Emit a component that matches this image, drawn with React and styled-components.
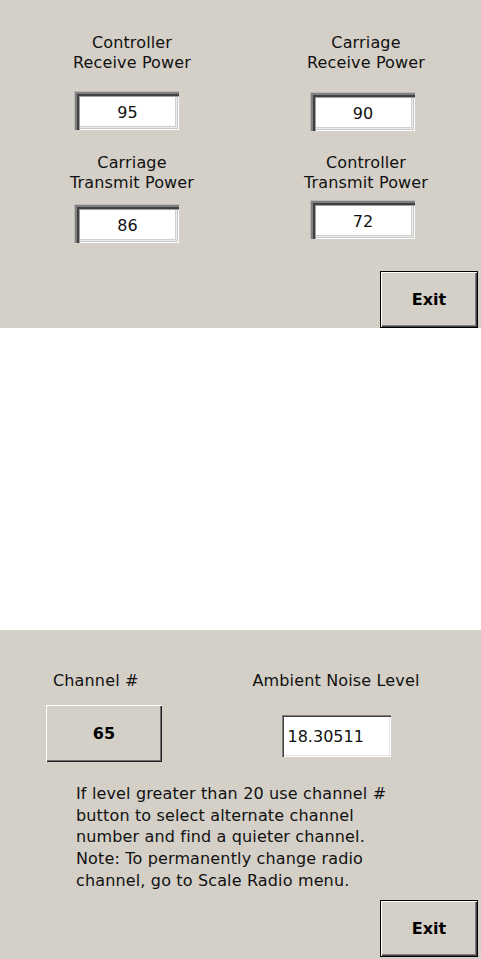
import React from "react";
import styled, { createGlobalStyle } from "styled-components";

const GlobalStyle = createGlobalStyle`
  html, body {
    margin: 0;
    padding: 0;
    background: #ffffff;
  }
  body {
    font-family: "DejaVu Sans", Verdana, sans-serif;
    color: #000000;
    width: 481px;
  }
`;

const Panel = styled.section`
  box-sizing: border-box;
  background: #d4d0c8;
  height: ${(p) => p.$h}px;
  margin-top: ${(p) => p.$mt || 0}px;
  padding-top: ${(p) => p.$pt}px;
  display: flex;
  flex-direction: column;
`;

const PowerGrid = styled.div`
  display: grid;
  grid-template-columns: 200px 200px;
  column-gap: 34px;
  row-gap: 22px;
  padding-left: 32px;
  align-items: start;
`;

const PowerCell = styled.div`
  display: flex;
  flex-direction: column;
  align-items: center;
`;

const Label = styled.div`
  font-size: 16px;
  line-height: 20px;
  letter-spacing: 0.15px;
  text-align: center;
  white-space: nowrap;
  color: #111111;
  margin-left: ${(p) => p.$ml || 0}px;
`;

const PowerBox = styled.div`
  box-sizing: border-box;
  width: 105px;
  height: 39px;
  margin-top: ${(p) => p.$mt}px;
  margin-right: ${(p) => p.$shift}px;
  background: #ffffff;
  box-shadow:
    inset 1px 1px 0 #b8b8b8,
    inset 3px 3px 0 #808080,
    inset 5px 5px 0 #404040,
    inset 6px 6px 0 #a0a0a0,
    inset -1px -1px 0 #ffffff,
    inset -2px -2px 0 #c8c8c8,
    inset -3px -3px 0 #ececec,
    inset -4px -4px 0 #d0d0d0;
  display: flex;
  align-items: center;
  justify-content: center;
  padding: 4px 2px 0 4px;
  font-size: 16px;
  line-height: 20px;
  color: #111111;
`;

const ExitButton = styled.button`
  box-sizing: border-box;
  width: 98px;
  height: 57px;
  margin-top: ${(p) => p.$mt}px;
  margin-left: auto;
  margin-right: 3px;
  background: #d4d0c8;
  border: 1px solid #000000;
  box-shadow:
    inset 1px 1px 0 #ffffff,
    inset -1px -1px 0 #404040,
    inset -2px -2px 0 #808080;
  font-family: "DejaVu Sans", Verdana, sans-serif;
  font-weight: bold;
  font-size: 16px;
  color: #000000;
  padding: 0;
  cursor: default;
`;

const ControlsRow = styled.div`
  display: flex;
  align-items: flex-start;
  padding-left: 46px;
  gap: 74px;
`;

const ChannelCol = styled.div`
  width: 116px;
  display: flex;
  flex-direction: column;
  align-items: flex-start;
`;

const NoiseCol = styled.div`
  width: 200px;
  display: flex;
  flex-direction: column;
  align-items: center;
`;

const ChannelButton = styled.button`
  box-sizing: border-box;
  width: 116px;
  height: 57px;
  margin-top: 14px;
  background: #d4d0c8;
  border: none;
  box-shadow:
    inset 1px 1px 0 #ffffff,
    inset -1px -1px 0 #202020,
    inset -2px -2px 0 #707070;
  font-family: "DejaVu Sans", Verdana, sans-serif;
  font-weight: bold;
  font-size: 16px;
  color: #000000;
  padding: 0;
  cursor: default;
`;

const NoiseBox = styled.div`
  box-sizing: border-box;
  width: 109px;
  height: 42px;
  margin-top: 24px;
  background: #ffffff;
  box-shadow:
    inset 1px 1px 0 #808080,
    inset 2px 2px 0 #404040,
    inset -1px -1px 0 #ffffff,
    inset -2px -2px 0 #e4e4e4;
  display: flex;
  align-items: center;
  padding: 1px 0 0 6px;
  font-size: 16px;
  line-height: 20px;
  color: #111111;
`;

const Note = styled.p`
  margin: 21px 0 0 76px;
  font-size: 16px;
  line-height: 21.7px;
  letter-spacing: 0.15px;
  white-space: nowrap;
  color: #111111;
`;

const powers = [
  { label: ["Controller", "Receive Power"], value: "95", mt: 18, shift: 11 },
  { label: ["Carriage", "Receive Power"], value: "90", mt: 19, shift: 8 },
  { label: ["Carriage", "Transmit Power"], value: "86", mt: 11, shift: 11 },
  { label: ["Controller", "Transmit Power"], value: "72", mt: 7, shift: 8 },
];

export default function App() {
  return (
    <>
      <GlobalStyle />
      <Panel $h={328} $pt={33}>
        <PowerGrid>
          {powers.map((p) => (
            <PowerCell key={p.label.join(" ")}>
              <Label>
                {p.label[0]}
                <br />
                {p.label[1]}
              </Label>
              <PowerBox $mt={p.mt} $shift={p.shift}>
                {p.value}
              </PowerBox>
            </PowerCell>
          ))}
        </PowerGrid>
        <ExitButton $mt={28}>Exit</ExitButton>
      </Panel>

      <Panel $h={329} $pt={41} $mt={302}>
        <ControlsRow>
          <ChannelCol>
            <Label $ml={7}>Channel #</Label>
            <ChannelButton>65</ChannelButton>
          </ChannelCol>
          <NoiseCol>
            <Label>Ambient Noise Level</Label>
            <NoiseBox>18.30511</NoiseBox>
          </NoiseCol>
        </ControlsRow>
        <Note>
          If level greater than 20 use channel #
          <br />
          button to select alternate channel
          <br />
          number and find a quieter channel.
          <br />
          Note: To permanently change radio
          <br />
          channel, go to Scale Radio menu.
        </Note>
        <ExitButton $mt={8}>Exit</ExitButton>
      </Panel>
    </>
  );
}
